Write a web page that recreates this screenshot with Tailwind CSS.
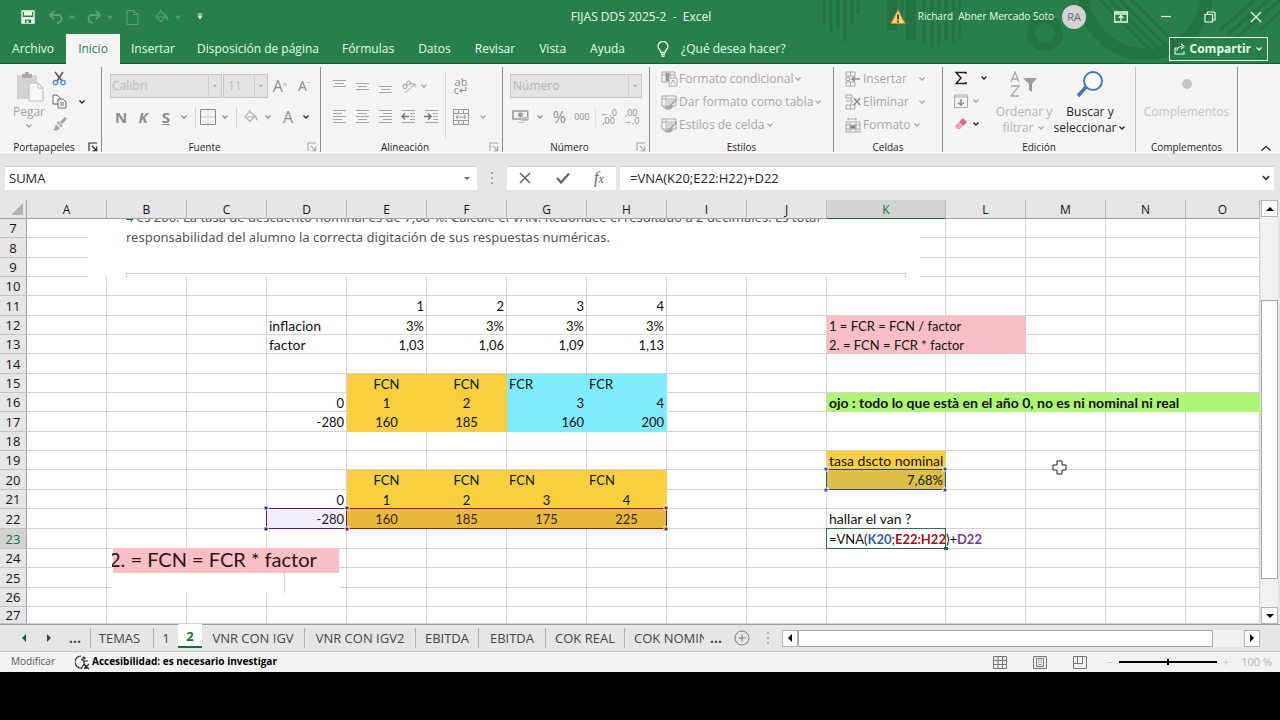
<!DOCTYPE html>
<html lang="es">

<head>
    <meta charset="UTF-8">
    <meta name="viewport" content="width=device-width, initial-scale=1">
    <title>FIJAS DD5 2025-2 - Excel</title>
    <script src="https://cdn.jsdelivr.net/npm/@tailwindcss/browser@4"></script>
</head>

<body class="bg-black min-h-screen font-['Open_Sans','Noto_Sans',sans-serif] text-xs text-[#262626] overflow-x-hidden">

    <!-- Shared icons -->
    <svg class="hidden">
        <symbol id="chev" viewBox="0 0 8 8"><path d="M1.5 2.5 4 5l2.5-2.5" fill="none" stroke="currentColor" stroke-width="1.3" /></symbol>
        <symbol id="launch" viewBox="0 0 10 10"><path d="M1 9V1h8M4 4l4.5 4.5M8.7 4.5v4.2H4.5" fill="none" stroke="currentColor" stroke-width="1.1" /></symbol>
        <symbol id="bucket" viewBox="0 0 16 16"><path d="M6 3 2 8l5 4.5L12 7 6.500 2.500V1M4 8h7" fill="none" stroke="currentColor" stroke-width="1.200" /><path d="M12 6c2 2 3 4 2 6-1-1-2-3-2-6z" fill="currentColor" /></symbol>
        <symbol id="tablebrush" viewBox="0 0 17 16"><path d="M1 2h14v10H1zM1 5h14M5 2v10" fill="none" stroke="currentColor" /><path d="M5.500 5.500h7v5h-7z" fill="#d4d4d4" /><path d="M16 5 9 12M10 11c-3 0-2 3-6 3 3 2 7 1 7-2z" fill="currentColor" stroke="currentColor" stroke-width="1.500" /></symbol>
    </svg>

    <!-- Title bar and tabs -->
    <header class="relative bg-[#287f48] text-[#e4ffe9]">
        <svg class="absolute right-0 top-0 w-[460px] h-[62px]" viewBox="0 0 460 62" fill="none" stroke="#20703d" stroke-opacity=".75">
            <path d="M4 0v26M11 0v32M18 0v28M25 0v42M32 0v24M38 0v14" stroke-width="3" />
            <path d="M72 0v30M91 0v40" stroke-width="10" />
            <path d="M82 0v20M104 0v44M112 0v47M119 0v46M126 0v40M133 0v44M140 0v38" stroke-width="3" />
            <circle cx="225" cy="33" r="14" stroke-width="8" />
            <circle cx="325" cy="-8" r="62" stroke-width="12" />
            <path d="M280 0l55 55M290 0l55 55M300 0l50 50M312 0l42 42M400 30l35-30M408 34l40-34M416 38l44-38M440 30l20-18" stroke-width="3" />
        </svg>

        <div class="relative flex items-center h-[34px]">
            <div class="flex flex-1 items-center pl-5 text-[#58a273]">
                <button aria-label="Guardar" class="w-4 text-[#e4ffe9]">
                    <svg class="size-4" viewBox="0 0 16 16"><path d="M2 2h12v12H2z" fill="none" stroke="currentColor" stroke-width="1.400" /><path d="M4 2.500h8v4H4zM2 8h12v6H2z" fill="currentColor" /><path d="M5 10.500h6v3.500H5z" fill="#287f48" /><path d="M6.500 11.500h2V14h-2z" fill="currentColor" /></svg>
                </button>
                <button aria-label="Deshacer" class="ml-3 w-4"><svg class="size-4" viewBox="0 0 16 16"><path d="M6 2 2 6l4 4M2 6h8c5 0 5 7-1 8" fill="none" stroke="currentColor" stroke-width="1.800" /></svg></button>
                <svg class="size-2 ml-1"><use href="#chev" /></svg>
                <button aria-label="Rehacer" class="ml-[10px] w-4"><svg class="size-4" viewBox="0 0 16 16"><path d="m10 2 4 4-4 4M14 6H6c-5 0-5 7 1 8" fill="none" stroke="currentColor" stroke-width="1.800" /></svg></button>
                <svg class="size-2 ml-1"><use href="#chev" /></svg>
                <button aria-label="Nuevo" class="ml-[10px] w-4"><svg class="size-4" viewBox="0 0 16 16"><path d="M3 1.500h7l4 4v10H3zM10 1.500v4h4" fill="none" stroke="currentColor" /></svg></button>
                <button aria-label="Relleno" class="ml-[14px] w-4"><svg class="size-4"><use href="#bucket" /></svg></button>
                <svg class="size-2 ml-1"><use href="#chev" /></svg>
                <button aria-label="Personalizar" class="ml-[14px] text-[#e4ffe9]"><svg class="size-2" viewBox="0 0 8 8"><path d="M2 1h4M2 3h4L4 6z" fill="currentColor" stroke="currentColor" /></svg></button>
            </div>
            <h1 class="whitespace-pre">FIJAS DD5 2025-2  -  Excel</h1>
            <div class="flex flex-1 items-center justify-end pr-[18px]">
                <svg class="size-4 mr-3" viewBox="0 0 16 16"><path d="M8 1 15 14.500H1z" fill="#f8cf7c" stroke="#d9862c" /><path d="M8 5.500v5M8 11.500v2" stroke="#40250a" stroke-width="1.600" /></svg>
                <span class="whitespace-pre text-[10px]">Richard  Abner Mercado Soto</span>
                <span class="ml-2 grid size-6 place-items-center rounded-full bg-[#d6d3d4] text-[11px] text-[#6b6b6b]">RA</span>
                <button aria-label="Opciones de cinta" class="ml-7"><svg class="w-[14px] h-3" viewBox="0 0 14 12"><path d="M.7 1h12.600v10H.7zM.7 3h12.600M7 10V5M4.500 7 7 4.700 9.500 7" fill="none" stroke="currentColor" stroke-width="1.300" /></svg></button>
                <button aria-label="Minimizar" class="ml-8"><svg class="size-3" viewBox="0 0 12 12"><path d="M1 5.500h10" stroke="currentColor" stroke-width="1.200" /></svg></button>
                <button aria-label="Restaurar" class="ml-8"><svg class="size-3" viewBox="0 0 12 12"><path d="M1 3.500h7.500V11H1zM3.500 3V1H10l1 1v7H9" fill="none" stroke="currentColor" stroke-width="1.200" /></svg></button>
                <button aria-label="Cerrar" class="ml-[34px]"><svg class="size-3" viewBox="0 0 12 12"><path d="m1 1 10 10M11 1 1 11" stroke="currentColor" stroke-width="1.300" /></svg></button>
            </div>
        </div>

        <nav class="relative flex items-stretch h-[30px] border-b border-[#1d5c35] whitespace-nowrap">
            <a href="#" class="grid place-items-center w-[66px]">Archivo</a>
            <a href="#" class="grid place-items-center w-[54px] -mb-px bg-[#f5f5f5] text-[#287f48]">Inicio</a>
            <a href="#" class="grid place-items-center px-[11px]">Insertar</a>
            <a href="#" class="grid place-items-center px-[11px]">Disposición de página</a>
            <a href="#" class="grid place-items-center px-3">Fórmulas</a>
            <a href="#" class="grid place-items-center px-3">Datos</a>
            <a href="#" class="grid place-items-center px-3">Revisar</a>
            <a href="#" class="grid place-items-center px-3">Vista</a>
            <a href="#" class="grid place-items-center px-3">Ayuda</a>
            <a href="#" class="flex items-center gap-3 ml-5">
                <svg class="w-3 h-4" viewBox="0 0 12 16"><path d="M4 11.500C4 9 1 8.500 1 5.500a5 5 0 0 1 10 0c0 3-3 3.500-3 6zM4 13.500h4M4.500 15.300h3" fill="none" stroke="currentColor" stroke-width="1.300" /></svg>
                ¿Qué desea hacer?
            </a>
            <button class="ml-auto mr-3 mt-[3px] mb-[2px] flex items-center gap-1 border border-[#e4ffe9] px-1 font-bold">
                <svg class="size-3" viewBox="0 0 12 12"><path d="M3 5H1v6h9V8M3 8c0-3 2-4.500 5-4.500M7 .8l3 2.700-3 2.700" fill="none" stroke="currentColor" stroke-width="1.100" /></svg>
                Compartir
                <svg class="size-2"><use href="#chev" /></svg>
            </button>
        </nav>
    </header>

    <!-- Ribbon -->
    <section class="flex h-[91px] pt-[3px] pb-[2px] bg-[#f4f4f4] border-b border-[#dcdcdc] whitespace-nowrap text-[#a8a8a8]">
        <div class="flex flex-col w-[102px] border-r border-[#8c8c8c]">
            <div class="flex flex-1">
                <button class="flex flex-col items-center w-[58px] pt-1" disabled>
                    <svg class="w-[30px] h-8" viewBox="0 0 30 32"><path d="M3 4h20v24H3z" fill="#d3d3d3" /><path d="M8 3h10v4H8zM11 1h4v3h-4z" fill="#a9a9a9" /><path d="M15 12h9l5 5v13H15z" fill="#f7f7f7" stroke="#bdbdbd" /><path d="M24 12v5h5" fill="none" stroke="#bdbdbd" /></svg>
                    <span class="mt-px leading-4">Pegar</span>
                    <svg class="size-2 mt-[2px]"><use href="#chev" /></svg>
                </button>
                <div class="flex flex-col gap-2 pt-1 -ml-[6px]">
                    <button aria-label="Cortar"><svg class="size-[15px]" viewBox="0 0 15 15" fill="none"><path d="m3 1 7 9M11 1 5 10" stroke="#555" stroke-width="1.600" /><circle cx="3.500" cy="11.500" r="2.200" stroke="#4a86c5" stroke-width="1.200" /><circle cx="11" cy="11.500" r="2.200" stroke="#4a86c5" stroke-width="1.200" /></svg></button>
                    <button aria-label="Copiar"><svg class="size-[15px]" viewBox="0 0 15 15" fill="#f7f7f7" stroke="#666"><path d="M1 1h4l3 3v6H1z" /><path d="M6 5h5l3 3v6H6zM8 9h4M8 11h4" /></svg></button>
                    <button aria-label="Copiar formato"><svg class="size-[15px]" viewBox="0 0 15 15"><path d="m14 1-5 5" stroke="#a0a0a0" stroke-width="3" /><path d="m6 4 5 5-2 1-4-4zM4 7l4 4c-2 3-4 3-7 2 2-1 2-3 3-6z" fill="#a8a8a8" /></svg></button>
                </div>
                <svg class="size-2 ml-[11px] mt-[31px] text-[#222]"><use href="#chev" /></svg>
            </div>
            <div class="flex items-center text-[10px] leading-[10px] text-[#262626]"><span class="flex-1 text-center">Portapapeles</span><svg class="size-[10px] mr-[3px]"><use href="#launch" /></svg></div>
        </div>

        <div class="flex flex-col w-[219px] border-r border-[#8c8c8c]">
            <div class="flex-1 pt-px pl-2">
                <div class="flex items-center h-9">
                    <label class="flex items-center w-[112px] h-6 border border-[#c4c4c4] bg-[#e3e3e3]"><select aria-label="Fuente" class="appearance-none flex-1 h-full pl-px border-r border-[#cfcfcf] text-[#bdbdbd]" disabled><option>Calibri</option></select><svg class="w-2 h-2 mx-[2px]" viewBox="0 0 8 8"><path d="M2 3h4L4 5z" fill="#aaa" /></svg></label>
                    <label class="flex items-center w-[45px] h-6 ml-px border border-[#c4c4c4] bg-[#e3e3e3]"><select aria-label="Tamaño" class="appearance-none flex-1 h-full pl-1 border-r border-[#cfcfcf] text-[#bdbdbd]" disabled><option>11</option></select><svg class="w-2 h-2 mx-[2px]" viewBox="0 0 8 8"><path d="M2 3h4L4 5z" fill="#aaa" /></svg></label>
                    <button class="w-6 text-base text-[#8d8d8d]" disabled>A<sup class="text-[8px]">^</sup></button>
                    <button class="w-6 text-sm text-[#8d8d8d]" disabled>A<sup class="text-[8px]">ˇ</sup></button>
                </div>
                <div class="flex items-center h-[26px] text-[#8d8d8d]">
                    <button class="w-[22px] text-[15px] leading-5 font-bold" disabled>N</button>
                    <button class="w-[22px] text-[15px] leading-5 font-bold italic" disabled>K</button>
                    <button class="w-6 text-[15px] leading-5 font-bold underline" disabled>S</button>
                    <svg class="size-2 ml-[2px]"><use href="#chev" /></svg>
                    <span class="h-5 ml-[7px] border-l border-[#d4d4d4]"></span>
                    <svg class="size-4 ml-1" viewBox="0 0 16 16" fill="none"><path d="M.5.5h15v15H.5z" stroke="#8a8a8a" /><path d="M8 1v14M1 8h14" stroke="#c9b9b9" stroke-dasharray="2 1" /></svg>
                    <svg class="size-2 ml-[5px] mr-[7px]"><use href="#chev" /></svg>
                    <span class="h-5 border-l border-[#d4d4d4]"></span>
                    <svg class="size-4 ml-[6px] text-[#b0b0b0]"><use href="#bucket" /></svg>
                    <svg class="size-2 ml-[5px]"><use href="#chev" /></svg>
                    <button class="w-6 ml-1 text-base" disabled>A</button>
                    <svg class="size-2 ml-[2px] text-[#222]"><use href="#chev" /></svg>
                </div>
            </div>
            <div class="flex items-center text-[10px] leading-[10px]"><span class="flex-1 text-center text-[#262626]">Fuente</span><svg class="size-[10px] mr-[3px]"><use href="#launch" /></svg></div>
        </div>

        <div class="flex flex-col w-[182px] border-r border-[#8c8c8c]">
            <div class="flex flex-1 pt-px pl-[11px]">
                <div class="w-[114px] my-1 border-r border-[#d4d4d4]">
                    <div class="flex items-center h-7 gap-2">
                        <svg class="size-[15px]" viewBox="0 0 15 15" stroke="currentColor"><path d="M1 1.500h13M3 4.500h9M1 7.500h13" /></svg>
                        <svg class="size-[15px]" viewBox="0 0 15 15" stroke="currentColor"><path d="M1 4.500h13M3 7.500h9M1 10.500h13" /></svg>
                        <svg class="size-[15px]" viewBox="0 0 15 15" stroke="currentColor"><path d="M1 7.500h13M3 10.500h9M1 13.500h13" /></svg>
                        <svg class="size-[15px]" viewBox="0 0 15 15" fill="none" stroke="currentColor"><path d="m4 14 10-9M10.500 5H14v3.500M7 8 3 4.500M8 5l3-1" /><circle cx="4" cy="7.500" r="2" /><circle cx="7.500" cy="4" r="2" /></svg>
                        <svg class="size-2 -ml-1"><use href="#chev" /></svg>
                    </div>
                    <div class="flex items-center h-8 gap-2">
                        <svg class="size-[15px]" viewBox="0 0 15 15" stroke="currentColor"><path d="M1 1.500h13M1 4.500h9M1 7.500h13M1 10.500h9M1 13.500h13" /></svg>
                        <svg class="size-[15px]" viewBox="0 0 15 15" stroke="currentColor"><path d="M1 1.500h13M3 4.500h9M1 7.500h13M3 10.500h9M1 13.500h13" /></svg>
                        <svg class="size-[15px]" viewBox="0 0 15 15" stroke="currentColor"><path d="M1 1.500h13M5 4.500h9M1 7.500h13M5 10.500h9M1 13.500h13" /></svg>
                        <svg class="size-[15px]" viewBox="0 0 15 15" fill="none" stroke="currentColor"><path d="M1 1.500h13M9 4.500h5M9 7.500h5M9 10.500h5M1 13.500h13" /><path d="M8 7.500H1M4 4.500l-3 3 3 3" stroke="#777" stroke-width="1.500" /></svg>
                        <svg class="size-[15px]" viewBox="0 0 15 15" fill="none" stroke="currentColor"><path d="M1 1.500h13M9 4.500h5M9 7.500h5M9 10.500h5M1 13.500h13" /><path d="M0 7.500h7M4 4.500l3 3-3 3" stroke="#777" stroke-width="1.500" /></svg>
                    </div>
                </div>
                <div class="pl-[7px]">
                    <div class="grid place-items-center size-4 mt-[10px] text-[11px] leading-[8px] text-[#8a8a8a]"><span>ab</span><span>c↵</span></div>
                    <div class="flex items-center mt-[15px]">
                        <svg class="size-4" viewBox="0 0 16 16" fill="none" stroke="#999"><path d="M.5.5h15v15H.5zM.5 4.500h15M.5 11.500h15M5.500.5v4M10.500.5v4M5.500 11.500v4M10.500 11.500v4M3 8h10M5 6 3 8l2 2M11 6l2 2-2 2" /></svg>
                        <svg class="size-2 ml-[10px]"><use href="#chev" /></svg>
                    </div>
                </div>
            </div>
            <div class="flex items-center text-[10px] leading-[10px]"><span class="flex-1 text-center text-[#262626]">Alineación</span><svg class="size-[10px] mr-[3px]"><use href="#launch" /></svg></div>
        </div>

        <div class="flex flex-col w-[147px] border-r border-[#8c8c8c]">
            <div class="flex-1 pt-px px-[7px]">
                <div class="flex items-center h-9">
                    <label class="flex items-center w-full h-6 border border-[#c4c4c4] bg-[#e3e3e3]"><select aria-label="Formato de número" class="appearance-none flex-1 h-full pl-[2px] border-r border-[#cfcfcf] text-[#b4b4b4]" disabled><option>Número</option></select><svg class="w-2 h-2 mx-[2px]" viewBox="0 0 8 8"><path d="M2 3h4L4 5z" fill="#aaa" /></svg></label>
                </div>
                <div class="flex items-center h-[26px] text-[#8d8d8d]">
                    <svg class="w-[18px] h-4 ml-[2px]" viewBox="0 0 18 16"><path d="M1 2h15v8H1z" fill="none" stroke="#999" stroke-width="1.500" /><circle cx="8.500" cy="6" r="2.500" fill="#999" /><path d="M10 8h7v2h-7zM9 11h7v1H9zM6 13h7v1H6z" fill="#c4c4c4" /></svg>
                    <svg class="size-2 ml-[6px]"><use href="#chev" /></svg>
                    <button class="w-6 ml-[4px] text-base" disabled>%</button>
                    <button class="w-[22px] text-[9px]" disabled>000</button>
                    <span class="h-5 ml-[2px] border-l border-[#e2e2e2]"></span>
                    <button class="w-[22px] ml-[2px] text-[9px] leading-[8px]" disabled>←,0<br>,00</button>
                    <button class="w-[22px] ml-px text-[9px] leading-[8px]" disabled>,00<br>→,0</button>
                </div>
            </div>
            <div class="flex items-center text-[10px] leading-[10px]"><span class="flex-1 text-center text-[#262626]">Número</span><svg class="size-[10px] mr-[3px]"><use href="#launch" /></svg></div>
        </div>

        <div class="flex flex-col w-[184px] border-r border-[#8c8c8c]">
            <div class="flex flex-col flex-1 items-start pl-[11px] text-xs">
                <button class="flex items-center h-[23px] gap-px" disabled><svg class="w-[17px] h-4" viewBox="0 0 17 16"><path d="M1 1h13v10H1zM1 4h13M5 1v10M9 1v10" fill="none" stroke="currentColor" /><path d="M5 2h3v8H5z" fill="#9a9a9a" /><path d="M8 7h8v8H8z" fill="#f4f4f4" stroke="currentColor" /><path d="m10 13 2-4 2 4" fill="none" stroke="currentColor" /></svg>Formato condicional<svg class="size-2"><use href="#chev" /></svg></button>
                <button class="flex items-center h-[23px] gap-px" disabled><svg class="w-[17px] h-4"><use href="#tablebrush" /></svg>Dar formato como tabla<svg class="size-2"><use href="#chev" /></svg></button>
                <button class="flex items-center h-[23px] gap-px" disabled><svg class="w-[17px] h-4"><use href="#tablebrush" /></svg>Estilos de celda<svg class="size-2"><use href="#chev" /></svg></button>
            </div>
            <div class="text-[10px] leading-[10px] text-center text-[#262626]">Estilos</div>
        </div>

        <div class="flex flex-col w-[109px] border-r border-[#8c8c8c]">
            <div class="flex flex-col flex-1 pl-[11px] pr-4">
                <button class="flex items-center h-[23px] gap-[2px]" disabled><svg class="size-4" viewBox="0 0 16 16" fill="none" stroke="currentColor"><path d="M1 1h9v4H1zM5.500 1v4M1 11h9v4H1zM5.500 11v4M1 6.500h4v3H1z" /><path d="M15 8H7M10 5.500 7 8l3 2.500" stroke="#888" stroke-width="1.400" /></svg>Insertar<svg class="size-2 ml-auto"><use href="#chev" /></svg></button>
                <button class="flex items-center h-[23px] gap-[2px]" disabled><svg class="size-4" viewBox="0 0 16 16" fill="none" stroke="currentColor"><path d="M1 1h6v3H1zM1 11h9v4H1zM5.500 11v4M1 7h6M5 5l3 2.500L5 10" /><path d="m9 4 6 7M15 4l-6 7" stroke="#888" stroke-width="1.400" /></svg>Eliminar<svg class="size-2 ml-auto"><use href="#chev" /></svg></button>
                <button class="flex items-center h-[23px] gap-[2px]" disabled><svg class="size-4" viewBox="0 0 16 16" fill="none" stroke="currentColor"><path d="M3 2h8M3 .5v3M11 .5v3M1 5h14v10H1zM1 8h14M1 12h14M5 5v10M11 5v10" /><path d="M5.500 8.500h5v3h-5z" fill="#888" /></svg>Formato<svg class="size-2"><use href="#chev" /></svg></button>
            </div>
            <div class="text-[10px] leading-[10px] text-center text-[#262626]">Celdas</div>
        </div>

        <div class="flex flex-col w-[193px] border-r border-[#c4c4c4]">
            <div class="flex flex-1">
                <div class="flex flex-col pl-[11px] w-[50px] text-[#222]">
                    <div class="flex items-center h-[21px]"><svg class="size-[14px]" viewBox="0 0 14 14"><path d="M12 3V1.500H2L7 7l-5 5.500h10V11" fill="none" stroke="currentColor" stroke-width="1.500" /></svg><svg class="size-2 ml-3"><use href="#chev" /></svg></div>
                    <div class="flex items-center h-[25px] text-[#a8a8a8]"><svg class="size-[14px]" viewBox="0 0 14 14" fill="none" stroke="currentColor"><path d="M.5 1h13v12.500H.5zM.5 3h13" /><path d="M7 5v6M4 8.500 7 11l3-2.500" stroke="#888" stroke-width="1.500" /></svg><svg class="size-2 ml-1"><use href="#chev" /></svg></div>
                    <div class="flex items-center h-[21px]"><svg class="size-[14px]" viewBox="0 0 14 14"><path d="m9 1 4 4-4 4-4-4z" fill="#d9688b" /><path d="m4.500 5.500 4 4L6 12H3L1 9z" fill="#e9a0b6" /></svg><svg class="size-2 ml-1"><use href="#chev" /></svg></div>
                </div>
                <button class="flex flex-col items-center w-[62px] pt-1 leading-4 text-[#b4b4b4]" disabled>
                    <svg class="w-7 h-[26px] mb-[7px]" viewBox="0 0 28 26" fill="none" stroke="#aaa" stroke-width="1.300"><path d="m1 11 4-10 4 10M2.500 8h5M1 15h8L1 25h8" /><path d="M13 7h14l-5 6v8l-3-2v-6z" fill="#9c9c9c" stroke="none" /></svg>
                    <span>Ordenar y</span><span class="flex items-center gap-1">filtrar <svg class="size-2"><use href="#chev" /></svg></span>
                </button>
                <button class="flex flex-col items-center w-[70px] pt-1 leading-4 text-[#262626]">
                    <svg class="w-7 h-[26px] mb-[7px]" viewBox="0 0 28 26" fill="none" stroke="#4477b3"><circle cx="17" cy="10" r="9" fill="#fff" stroke-width="2" /><path d="m10 16-8 9" stroke-width="3.500" /></svg>
                    <span>Buscar y</span><span class="flex items-center gap-[2px]">seleccionar <svg class="size-2"><use href="#chev" /></svg></span>
                </button>
            </div>
            <div class="text-[10px] leading-[10px] text-center text-[#262626]">Edición</div>
        </div>

        <div class="flex flex-col w-[102px] border-r border-[#8c8c8c]">
            <button class="flex flex-1 flex-col items-center pt-3 leading-4 text-[#c6c6c6]" disabled>
                <span class="size-[10px] mb-[15px] rounded-full bg-[#c6c6c6]"></span>Complementos
            </button>
            <div class="text-[10px] leading-[10px] text-center text-[#262626]">Complementos</div>
        </div>
        <button aria-label="Contraer la cinta" class="ml-auto mr-2 self-end text-[#222]"><svg class="w-3 h-2" viewBox="0 0 12 8"><path d="m1.500 6.500 4.500-4 4.500 4" fill="none" stroke="currentColor" stroke-width="1.300" /></svg></button>
    </section>

    <!-- Formula bar -->
    <section class="flex items-center h-[45px] pl-[5px] pr-[6px] bg-[#e6e6e6] text-[13px]">
        <div class="flex items-center w-[472px] h-6 bg-white border-t border-[#d4d4d4]">
            <input type="text" aria-label="Cuadro de nombres" value="SUMA" class="flex-1 h-full pl-1 outline-none">
            <svg class="size-2 mr-[6px]" viewBox="0 0 8 8"><path d="M1 3h6L4 6z" fill="#666" /></svg>
        </div>
        <svg class="w-1 h-3 mx-[13px]" viewBox="0 0 4 12"><path d="M1 0h2v2H1zM1 5h2v2H1zM1 10h2v2H1z" fill="#a8a8a8" /></svg>
        <div class="flex items-center justify-around w-[109px] h-6 bg-white border-t border-[#d4d4d4] text-[#666]">
            <button aria-label="Cancelar"><svg class="size-3" viewBox="0 0 12 12"><path d="m1 1 10 10M11 1 1 11" stroke="currentColor" stroke-width="1.500" /></svg></button>
            <button aria-label="Introducir"><svg class="w-[14px] h-3" viewBox="0 0 14 12"><path d="m1 6 4 4.500L13 1.500" fill="none" stroke="currentColor" stroke-width="2.200" /></svg></button>
            <button class="font-['Liberation_Serif',serif] italic text-base leading-4">f<span class="text-xs">x</span></button>
        </div>
        <div class="flex flex-1 items-center h-6 ml-1 bg-white border-t border-[#d4d4d4]">
            <input type="text" aria-label="Barra de fórmulas" value="=VNA(K20;E22:H22)+D22" class="flex-1 h-full pl-[10px] outline-none">
            <svg class="size-[10px] mr-[3px] text-[#333]"><use href="#chev" /></svg>
        </div>
    </section>

    <!-- Sheet -->
    <main class="flex bg-[#e6e6e6]">
        <div class="relative flex-1 overflow-hidden bg-white">
            <table class="w-full table-fixed border-separate border-spacing-0 font-['Lato',sans-serif] text-[13px] leading-4 text-[#111] whitespace-nowrap">
                <colgroup id="cols"></colgroup>
                <thead class="bg-[#e6e6e6] font-['Open_Sans',sans-serif] text-xs leading-4"><tr id="head"></tr></thead>
                <tbody id="grid"></tbody>
            </table>

            <!-- Pasted pictures -->
            <div class="absolute left-[88px] top-[19px] w-[832px] h-[58px] overflow-hidden bg-white pl-[38px] font-['Noto_Sans',sans-serif] text-[13px] leading-5 text-[#555] whitespace-nowrap">
                <p class="-mt-3">4 es 200. La tasa de descuento nominal es de 7,68 %. Calcule el VAN. Redondee el resultado a 2 decimales. Es total</p>
                <p>responsabilidad del alumno la correcta digitación de sus respuestas numéricas.</p>
                <div class="mt-[26px] w-[780px] h-2 border border-b-0 border-[#cfcfcf]"></div>
            </div>
            <div class="absolute left-[112px] top-[348px] w-[227px] h-[45px] overflow-hidden bg-white font-['Lato',sans-serif] text-[20px] leading-[22px] text-[#2a1416] whitespace-nowrap">
                <div class="ml-px h-[25px] bg-[#f9bfc7]"><span class="-ml-1">2. = FCN = FCR * factor</span></div>
                <div class="w-[173px] h-5 border-r border-[#d4d4d4]"></div>
            </div>

            <!-- Ranges used by the formula -->
            <div class="absolute left-[266px] top-[308px] w-[81px] h-[21px] border border-[#46237a] bg-[#7a5cc8]/10"></div>
            <div class="absolute left-[346px] top-[308px] w-[321px] h-[21px] border border-[#8f1414] bg-[#b06030]/20"></div>
            <div class="absolute left-[826px] top-[269px] w-[120px] h-[21px] border border-[#2b4a8f] bg-[#2b4a8f]/12"></div>
            <div class="absolute left-[826px] top-[328px] w-[120px] h-[21px] border border-[#35704a]"></div>
            <svg class="absolute left-0 top-0 w-[960px] h-[360px]" viewBox="0 0 960 360">
                <path d="M264 306h4v4h-4zM264 327h4v4h-4zM345 306h4v4h-4zM345 327h4v4h-4z" fill="#46237a" stroke="#fff" />
                <path d="M664 306h4v4h-4zM664 327h4v4h-4z" fill="#8f1414" stroke="#fff" />
                <path d="M824 267h4v4h-4zM824 288h4v4h-4zM943 267h4v4h-4zM943 288h4v4h-4z" fill="#2f55a8" stroke="#fff" />
                <path d="M944 347h4v3h-4z" fill="#1e6b3c" />
            </svg>

            <!-- Mouse pointer -->
            <svg class="absolute left-[1052px] top-[260px] size-[15px]" viewBox="0 0 15 15"><path d="M5 1h5v4h4v5h-4v4H5v-4H1V5h4z" fill="#fff" stroke="#222" /></svg>
        </div>

        <div class="flex flex-col w-5 pl-px pr-[2px] text-black">
            <button aria-label="Arriba" class="grid place-items-center h-[17px] border border-[#b4b4b4] bg-white"><svg class="size-2" viewBox="0 0 8 8"><path d="M0 6h8L4 2z" /></svg></button>
            <div class="flex flex-1 flex-col bg-[#f1f1f1]">
                <div class="flex-[84]"></div>
                <div class="flex-[280] border border-[#a8a8a8] bg-white"></div>
                <div class="flex-[28]"></div>
            </div>
            <button aria-label="Abajo" class="grid place-items-center h-[17px] border border-[#b4b4b4] bg-white"><svg class="size-2" viewBox="0 0 8 8"><path d="M0 2h8L4 6z" /></svg></button>
        </div>
    </main>

    <!-- Sheet tabs -->
    <nav class="flex items-center h-[27px] bg-[#e6e6e6] border-t border-[#9aa09a] whitespace-nowrap text-[13px] text-[#444]">
        <button aria-label="Hoja anterior" class="ml-5"><svg class="size-2" viewBox="0 0 8 8"><path d="M6 0v8L2 4z" fill="#1c5a33" /></svg></button>
        <button aria-label="Hoja siguiente" class="ml-[17px]"><svg class="size-2" viewBox="0 0 8 8"><path d="M2 0v8l4-4z" fill="#1c5a33" /></svg></button>
        <button class="ml-4 w-[21px] text-left font-bold text-sm leading-4">...</button>
        <a href="#" class="w-16 pr-[5px] text-center leading-5 border-l border-r border-[#b4b4b4]">TEMAS</a>
        <a href="#" class="w-6 text-center leading-5">1</a>
        <a href="#" class="w-6 self-start h-6 -mt-px text-center leading-6 font-bold bg-white text-[#1e6b3c] border-b-2 border-[#1e6b3c]">2</a>
        <a href="#" class="w-[103px] text-center leading-5 border-r border-[#b4b4b4]">VNR CON IGV</a>
        <a href="#" class="w-[111px] text-center leading-5 border-r border-[#b4b4b4]">VNR CON IGV2</a>
        <a href="#" class="w-[63px] text-center leading-5 border-r border-[#b4b4b4]">EBITDA</a>
        <a href="#" class="w-[67px] text-center leading-5 border-r border-[#b4b4b4]">EBITDA</a>
        <a href="#" class="w-[79px] text-center leading-5 border-r border-[#b4b4b4]">COK REAL</a>
        <a href="#" class="w-[79px] pl-[9px] leading-5 overflow-hidden">COK NOMINAL</a>
        <button class="ml-[6px] font-bold text-sm leading-4">...</button>
        <button aria-label="Hoja nueva" class="ml-3"><svg class="size-4" viewBox="0 0 16 16" fill="none" stroke="#777"><circle cx="8" cy="8" r="7" /><path d="M8 4.500v7M4.500 8h7" /></svg></button>
        <svg class="w-1 h-3 ml-4" viewBox="0 0 4 12"><path d="M1 0h2v2H1zM1 5h2v2H1zM1 10h2v2H1z" fill="#b4b4b4" /></svg>
        <div class="flex flex-1 h-[17px] ml-3 mr-5 bg-[#f0f0f0]">
            <button aria-label="Izquierda" class="grid place-items-center w-4 border border-[#b4b4b4] bg-white"><svg class="size-2" viewBox="0 0 8 8"><path d="M6 0v8L2 4z" /></svg></button>
            <div class="flex-[415] border border-[#a8a8a8] bg-white"></div>
            <div class="flex-[31]"></div>
            <button aria-label="Derecha" class="grid place-items-center w-4 border border-[#b4b4b4] bg-white"><svg class="size-2" viewBox="0 0 8 8"><path d="M2 0v8l4-4z" /></svg></button>
        </div>
    </nav>

    <!-- Status bar -->
    <footer class="flex items-center h-[21px] pl-[11px] pr-2 bg-[#f2f2f2] border-t border-[#c8c8c8] text-[10px] text-[#555] whitespace-nowrap">
        <span>Modificar</span>
        <svg class="size-[15px] ml-5 mr-[2px]" viewBox="0 0 15 15" fill="none" stroke="#333" stroke-width="1.200"><path d="M6 1a6 6 0 0 0 0 12M6 4l3 2h4M9 6v3l3 5M9 9l-3 5M9 14l5-5M9 9l5 5" /><circle cx="9" cy="3" r="1" /></svg>
        <button class="font-bold text-black">Accesibilidad: es necesario investigar</button>
        <div class="flex items-center ml-auto">
            <button aria-label="Normal"><svg class="size-[14px]" viewBox="0 0 14 14" fill="none" stroke="#777"><path d="M.5 1.500h13v12H.5zM5 1.500v12M9.500 1.500v12M.5 5.500h13M.5 9.500h13" /></svg></button>
            <button aria-label="Diseño de página" class="ml-[26px]"><svg class="size-[14px]" viewBox="0 0 14 14" fill="none" stroke="#777"><path d="M.5 1.500h13v12H.5zM3.500 3.500h7v8h-7z" /><path d="M5 5.500h4M5 7.500h4M5 9.500h4" stroke="#aaa" /></svg></button>
            <button aria-label="Salto de página" class="ml-[26px]"><svg class="size-[14px]" viewBox="0 0 14 14" fill="none" stroke="#777"><path d="M.5 1.500h13v12H.5zM4.500 1.500v7M9.500 1.500v7M1 8.500h8.500" /></svg></button>
            <button aria-label="Alejar" class="ml-5 text-[11px] text-[#c4c4c4]">−</button>
            <input type="range" aria-label="Zoom" min="0" max="200" value="100" class="w-[98px] h-[2px] mx-[6px] appearance-none bg-black [&::-webkit-slider-thumb]:appearance-none [&::-webkit-slider-thumb]:w-[2px] [&::-webkit-slider-thumb]:h-[6px] [&::-webkit-slider-thumb]:bg-black">
            <button aria-label="Acercar" class="text-[11px] text-[#c4c4c4]">+</button>
            <span class="ml-3 text-[11px] text-[#b4b4b4]">100 %</span>
        </div>
    </footer>

    <script>
        const letters = 'ABCDEFGHIJKLMNO'.split('');
        const yellow = 'bg-[#f8d03f] border-[#f8d03f]';
        const cyan = 'bg-[#7eecfb] border-[#7eecfb]';
        const pink = 'bg-[#f9bfc7] border-[#f9bfc7]';
        const left = 'text-left', center = 'text-center', right = 'text-right';
        const label = 'text-left text-[14px]';

        // row number -> height in px
        const heights = { 7: 19, 8: 20, 9: 19, 10: 19, 11: 20, 12: 19, 13: 19, 14: 20, 15: 19, 16: 19, 17: 20, 18: 19, 19: 19, 20: 20, 21: 19, 22: 20, 23: 20, 24: 19, 25: 20, 26: 19, 27: 17 };

        // cell -> [content, alignment, fill, colspan]
        const cells = {
            E11: ['1', right], F11: ['2', right], G11: ['3', right], H11: ['4', right],
            D12: ['inflacion', label], E12: ['3%', right], F12: ['3%', right], G12: ['3%', right], H12: ['3%', right],
            D13: ['factor', label], E13: ['1,03', right], F13: ['1,06', right], G13: ['1,09', right], H13: ['1,13', right],
            K12: ['1 = FCR = FCN / factor', left, pink, 2],
            K13: ['2. = FCN = FCR * factor', left, pink, 2],
            E15: ['FCN', center, yellow], F15: ['FCN', center, yellow], G15: ['FCR', left, cyan], H15: ['FCR', left, cyan],
            D16: ['0', right], E16: ['1', center, yellow], F16: ['2', center, yellow], G16: ['3', right, cyan], H16: ['4', right, cyan],
            D17: ['-280', right], E17: ['160', center, yellow], F17: ['185', center, yellow], G17: ['160', right, cyan], H17: ['200', right, cyan],
            K16: ['<b>ojo : todo lo que està en el año 0, no es ni nominal ni real</b>', label, 'bg-[#aef573] border-[#aef573]', 5],
            K19: ['tasa dscto nominal', label, yellow],
            K20: ['7,68%', right, yellow],
            E20: ['FCN', center, yellow], F20: ['FCN', center, yellow], G20: ['FCN', left, yellow], H20: ['FCN', left, yellow],
            D21: ['0', right], E21: ['1', center, yellow], F21: ['2', center, yellow], G21: ['3', center, yellow], H21: ['4', center, yellow],
            D22: ['-280', right], E22: ['160', center, yellow], F22: ['185', center, yellow], G22: ['175', center, yellow], H22: ['225', center, yellow],
            K22: ['hallar el van ?', label],
            K23: ['=VNA(<b class="text-[#2f5fb5]">K20</b>;<b class="text-[#a3101f]">E22:H22</b>)+<b class="text-[#6b3fa0]">D22</b>', left]
        };

        const widths = { K: 'w-[119px]', O: '' };
        document.getElementById('cols').innerHTML = '<col class="w-[27px]">' +
            letters.map(l => `<col class="${l in widths ? widths[l] : 'w-[80px]'}">`).join('');

        document.getElementById('head').innerHTML =
            '<th class="h-[19px] p-0 border-r border-b border-[#a0a0a0]"><svg class="ml-auto mr-[2px] size-[14px]" viewBox="0 0 14 14"><path d="M13 1v12H1z" fill="#b4b4b4" /></svg></th>' +
            letters.map(l => {
                const look = l === 'K' ? 'bg-[#d2d4d2] text-[#1e6b3c] border-b-[#1e6b3c]' : 'border-b-[#a0a0a0]';
                return `<th class="p-0 pt-[2px] font-normal border-r border-b border-r-[#b8b8b8] ${look}">${l}</th>`;
            }).join('');

        document.getElementById('grid').innerHTML = Object.entries(heights).map(([n, h]) => {
            const active = n === '23' ? 'bg-[#d2d4d2] text-[#1e6b3c]' : 'bg-[#e6e6e6]';
            const height = h === 20 ? 'h-[20px]' : h === 19 ? 'h-[19px]' : 'h-[17px]';
            let row = `<th class="${height} p-0 font-normal font-['Open_Sans',sans-serif] border-r border-b border-r-[#a0a0a0] border-b-[#c4c4c4] ${active}">${n}</th>`;
            for (let i = 0; i < letters.length; i++) {
                const [text, align, fill, span] = cells[letters[i] + n] || ['', left];
                row += `<td colspan="${span || 1}" class="pt-px pb-0 px-[2px] border-r border-b ${align} ${fill || 'border-[#d4d4d4]'}">${text}</td>`;
                if (span) i += span - 1;
            }
            return `<tr>${row}</tr>`;
        }).join('');
    </script>

</body>

</html>
